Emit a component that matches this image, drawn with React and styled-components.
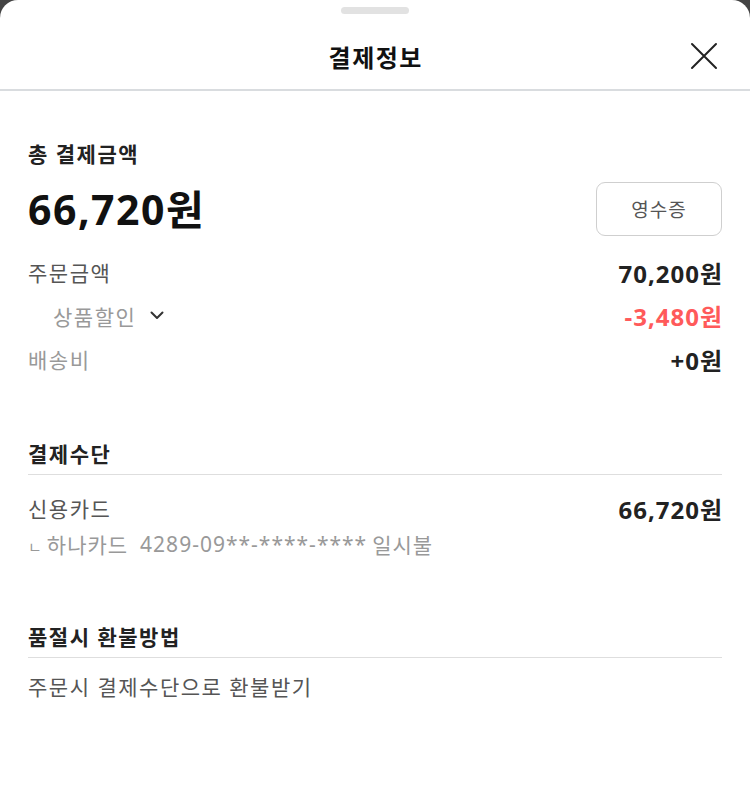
import React from "react";
import styled, { createGlobalStyle } from "styled-components";

const Global = createGlobalStyle`
  html, body { margin: 0; padding: 0; background: #444; }
  body { font-family: "Noto Sans", "Noto Sans CJK KR", sans-serif; }
  * { box-sizing: border-box; }
`;

const Sheet = styled.div`
  width: 750px;
  min-height: 810px;
  background: #fff;
  border-radius: 18px 18px 0 0;
  color: #222;
`;

const Header = styled.header`
  padding-top: 7px;
  border-bottom: 2px solid #d9dcdf;
`;

const Handle = styled.div`
  width: 68px;
  height: 7px;
  margin: 0 auto;
  border-radius: 4px;
  background: #e2e2e2;
`;

const TitleBar = styled.div`
  height: 75px;
  padding: 9px 28px 0 28px;
  display: grid;
  grid-template-columns: 1fr auto 1fr;
  align-items: center;
`;

const Title = styled.h1`
  margin: 0;
  grid-column: 2;
  font-size: 24px;
  font-weight: 700;
  color: #111;
  letter-spacing: 1.5px;
  margin-right: -1.5px;
`;

const CloseButton = styled.button`
  justify-self: end;
  width: 34px;
  height: 34px;
  padding: 0;
  margin-right: 1px;
  border: 0;
  background: none;
  display: flex;
  align-items: center;
  justify-content: center;
`;

const Content = styled.main`
  padding: 0 28px;
`;

const Section = styled.section`
  padding-top: ${(p) => p.$top}px;
`;

const SectionTitle = styled.h2`
  margin: 0;
  font-size: 21px;
  line-height: 30px;
  font-weight: 700;
  letter-spacing: 1.5px;
  color: #222;
  padding-bottom: ${(p) => (p.$divider ? 5 : 0)}px;
  border-bottom: ${(p) => (p.$divider ? "1px solid #dedede" : "none")};
`;

const TotalRow = styled.div`
  margin-top: 13px;
  display: flex;
  align-items: center;
  justify-content: space-between;
  height: 54px;
`;

const TotalAmount = styled.div`
  font-size: 41px;
  font-weight: 700;
  color: #111;
  line-height: 54px;
  letter-spacing: 1.5px;
`;

const ReceiptButton = styled.button`
  width: 126px;
  height: 54px;
  border: 1px solid #cfcfcf;
  border-radius: 9px;
  background: #fff;
  font-family: inherit;
  font-size: 19px;
  letter-spacing: 1px;
  color: #555;
`;

const Rows = styled.div`
  margin-top: ${(p) => p.$top}px;
  display: flex;
  flex-direction: column;
  gap: ${(p) => p.$gap}px;
`;

const Row = styled.div`
  display: flex;
  align-items: center;
  justify-content: space-between;
  height: 30px;
  padding-left: ${(p) => p.$indent || 0}px;
`;

const Label = styled.span`
  display: inline-flex;
  align-items: center;
  gap: 14px;
  font-size: 21px;
  letter-spacing: 1.5px;
  color: ${(p) => p.$color || "#555"};
`;

const Amount = styled.span`
  font-size: 24px;
  font-weight: 700;
  letter-spacing: 1px;
  margin-right: -1px;
  color: ${(p) => p.$color || "#222"};
`;

const SubLine = styled.div`
  height: 30px;
  display: flex;
  align-items: center;
  font-size: 21px;
  letter-spacing: 1px;
  color: #999;
`;

const Corner = styled.span`
  font-size: 15px;
  margin-right: 4px;
  position: relative;
  top: 2px;
`;

const CardNo = styled.span`
  margin-left: 12px;
  margin-right: 5px;
`;

const Chevron = () => (
  <svg width="14" height="9" viewBox="0 0 14 9" fill="none">
    <path d="M1.5 1.5 L7 7 L12.5 1.5" stroke="#333" strokeWidth="2" strokeLinecap="round" strokeLinejoin="round" />
  </svg>
);

const CloseIcon = () => (
  <svg width="28" height="28" viewBox="0 0 28 28" fill="none">
    <path d="M2 2 L26 26 M26 2 L2 26" stroke="#222" strokeWidth="2" strokeLinecap="round" />
  </svg>
);

export default function App() {
  return (
    <>
      <Global />
      <Sheet>
        <Header>
          <Handle />
          <TitleBar>
            <Title>결제정보</Title>
            <CloseButton aria-label="닫기">
              <CloseIcon />
            </CloseButton>
          </TitleBar>
        </Header>
        <Content>
          <Section $top={48}>
            <SectionTitle>총 결제금액</SectionTitle>
            <TotalRow>
              <TotalAmount>66,720원</TotalAmount>
              <ReceiptButton>영수증</ReceiptButton>
            </TotalRow>
            <Rows $top={21} $gap={13.5}>
              <Row>
                <Label>주문금액</Label>
                <Amount>70,200원</Amount>
              </Row>
              <Row $indent={25}>
                <Label $color="#999">
                  상품할인
                  <Chevron />
                </Label>
                <Amount $color="#ff5a5a">-3,480원</Amount>
              </Row>
              <Row>
                <Label $color="#999">배송비</Label>
                <Amount>+0원</Amount>
              </Row>
            </Rows>
          </Section>
          <Section $top={65}>
            <SectionTitle $divider>결제수단</SectionTitle>
            <Rows $top={18} $gap={6}>
              <Row>
                <Label>신용카드</Label>
                <Amount>66,720원</Amount>
              </Row>
              <SubLine>
                <Corner>ㄴ</Corner>
                하나카드
                <CardNo>4289-09**-****-****</CardNo>
                일시불
              </SubLine>
            </Rows>
          </Section>
          <Section $top={63}>
            <SectionTitle $divider>품절시 환불방법</SectionTitle>
            <Rows $top={13} $gap={0}>
              <Row>
                <Label>주문시 결제수단으로 환불받기</Label>
              </Row>
            </Rows>
          </Section>
        </Content>
      </Sheet>
    </>
  );
}
